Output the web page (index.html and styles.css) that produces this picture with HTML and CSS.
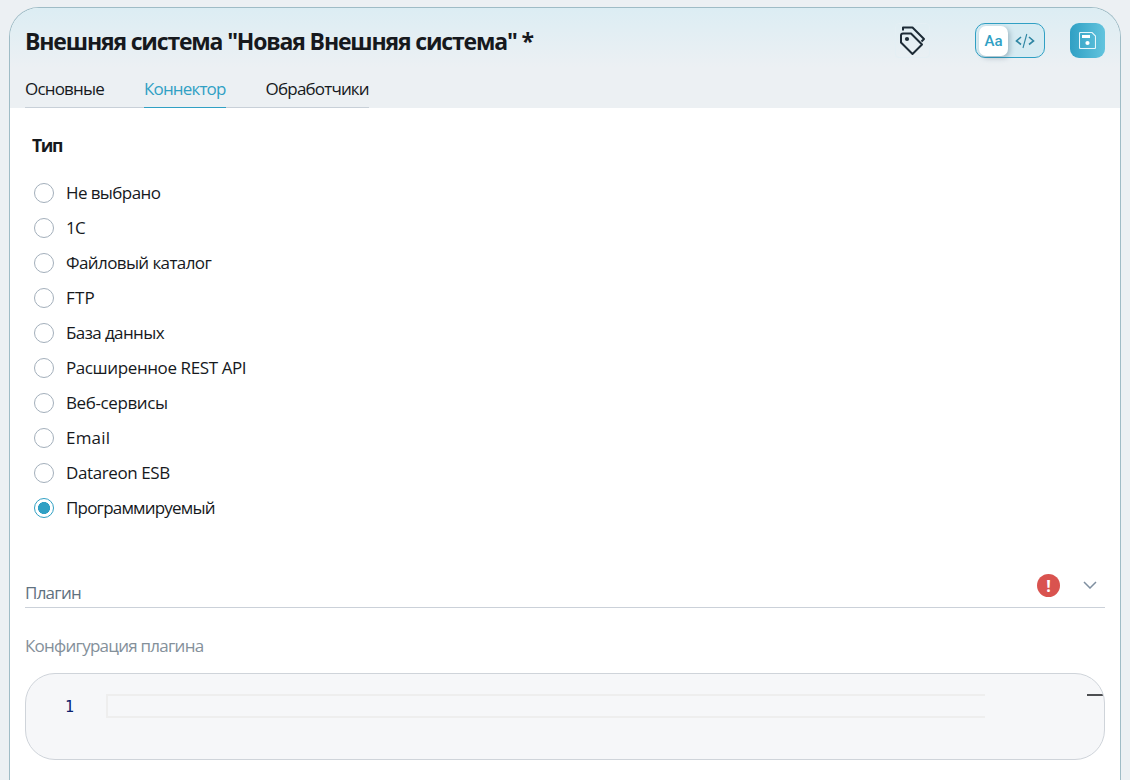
FILE: index.html
```html
<!DOCTYPE html>
<html lang="ru">
<head>
    <meta charset="UTF-8">
    <meta name="viewport" content="width=device-width, initial-scale=1.0">
    <title>Внешняя система</title>
    <link rel="stylesheet" href="styles.css">
</head>
<body>
<div class="panel">
    <header class="header">
        <div class="title-row">
            <h1>Внешняя система "Новая Внешняя система" *</h1>
            <div class="actions">
                <button type="button" class="tag-button" aria-label="Метки">
                    <svg width="28" height="30" viewBox="0 0 28 30" fill="none" stroke="#1d2b36" stroke-width="2" stroke-linejoin="round">
                        <path d="M4 4.5V1.5H13.5L25 13L22.5 15.5"/>
                        <path d="M4 7.5H12L23 18.5L13.5 28L2 16.5V9.5Q2 7.5 4 7.5Z"/>
                        <circle cx="8" cy="13" r="2.1" fill="#1d2b36" stroke="none"/>
                    </svg>
                </button>
                <div class="mode-switch">
                    <span class="mode active">Aa</span>
                    <span class="mode">
                        <svg width="20" height="16" viewBox="0 0 20 16" fill="none" stroke="#2f86a3" stroke-width="1.6">
                            <path d="M6 4L1.5 8L6 11.5M14 4L18.5 8L14 11.5"/>
                            <path d="M11.8 1L8 15" stroke-width="1.1"/>
                        </svg>
                    </span>
                </div>
                <button type="button" class="save-button" aria-label="Сохранить">
                    <svg width="17" height="17" viewBox="0 0 17 17" fill="none" stroke="#e6f6fb" stroke-width="1.1">
                        <path d="M1.5 .5H13L16.5 4V15.5Q16.5 16.5 15.5 16.5H1.5Q.5 16.5 .5 15.5V1.5Q.5 .5 1.5 .5Z"/>
                        <path d="M3 3H11V6H3Z" fill="#fff" stroke="none"/>
                        <circle cx="8.5" cy="11" r="2.1" fill="#fff" stroke="none"/>
                    </svg>
                </button>
            </div>
        </div>
        <nav class="tabs">
            <a class="tab">Основные</a>
            <a class="tab active">Коннектор</a>
            <a class="tab">Обработчики</a>
        </nav>
    </header>
    <main class="content">
        <h2>Тип</h2>
        <div class="radio-list">
            <label class="radio"><input type="radio" name="type"><span>Не выбрано</span></label>
            <label class="radio"><input type="radio" name="type"><span>1С</span></label>
            <label class="radio"><input type="radio" name="type"><span>Файловый каталог</span></label>
            <label class="radio latin"><input type="radio" name="type"><span>FTP</span></label>
            <label class="radio"><input type="radio" name="type"><span>База данных</span></label>
            <label class="radio mixed"><input type="radio" name="type"><span>Расширенное REST API</span></label>
            <label class="radio mixed"><input type="radio" name="type"><span>Веб-сервисы</span></label>
            <label class="radio latin"><input type="radio" name="type"><span>Email</span></label>
            <label class="radio mixed"><input type="radio" name="type"><span>Datareon ESB</span></label>
            <label class="radio tight"><input type="radio" name="type" checked><span>Программируемый</span></label>
        </div>
        <div class="select">
            <span class="select-label">Плагин</span>
            <span class="error">!</span>
            <svg class="chevron" width="14" height="8" viewBox="0 0 14 8" fill="none" stroke="#7f8fa0" stroke-width="1.5">
                <path d="M1 1L7 7L13 1"/>
            </svg>
        </div>
        <div class="config-label">Конфигурация плагина</div>
        <div class="editor">
            <span class="line-number">1</span>
            <div class="line"></div>
            <div class="cursor-mark"></div>
        </div>
    </main>
</div>
</body>
</html>
```
FILE: styles.css
```css
* {
    box-sizing: border-box;
}
body {
    margin: 0;
    padding: 7px 9px 0;
    height: 780px;
    overflow: hidden;
    background: #ecf0f3;
    font-family: 'Open Sans', 'Noto Sans', sans-serif;
    font-size: 17px;
    letter-spacing: -0.75px;
    line-height: 24px;
    color: #16191d;
}
.panel {
    height: 773px;
    border: 1px solid #9fbcc6;
    border-bottom: none;
    border-radius: 30px 30px 0 0;
    background: #fff;
    overflow: hidden;
}
.header {
    height: 100px;
    padding: 15px 15px 0;
    background: linear-gradient(#dcedf3, #ecf0f3 60%);
}
.title-row {
    display: flex;
    justify-content: space-between;
    height: 35px;
}
h1 {
    margin: 0;
    font-size: 23px;
    letter-spacing: -1.17px;
    line-height: 36px;
    font-weight: 700;
    white-space: nowrap;
}
.actions {
    display: flex;
}
button {
    padding: 0;
    border: none;
    display: flex;
    align-items: center;
    justify-content: center;
}
.tag-button {
    width: 35px;
    height: 35px;
    margin-right: 45px;
    background: none;
    border: 1px solid #e4eff4;
    border-radius: 4px;
}
.mode-switch {
    display: flex;
    width: 70px;
    height: 35px;
    padding: 2px 3px;
    margin-right: 25px;
    border: 1px solid #30a0c4;
    border-radius: 10px;
    background: #d6ebf2;
}
.mode {
    display: flex;
    align-items: center;
    justify-content: center;
    width: 34px;
    height: 29px;
}
.mode.active {
    width: 30px;
    height: 30px;
    border-radius: 7px;
    background: #fff;
    box-shadow: 2px 2px 5px rgba(60, 90, 110, 0.35);
    font-family: Roboto, sans-serif;
    font-size: 15px;
    letter-spacing: 0;
    font-weight: 500;
    color: #30a0c4;
}
.save-button {
    width: 35px;
    height: 35px;
    border-radius: 9px;
    background: linear-gradient(90deg, #30a0c4, #62c4de);
}
.tabs {
    display: flex;
    gap: 40px;
    width: fit-content;
    height: 35px;
    margin-top: 15px;
    box-shadow: inset 0 -1px #c8d0d8;
}
.tab {
    letter-spacing: -0.82px;
    line-height: 32px;
    white-space: nowrap;
}
.tab.active {
    color: #30a0c4;
    border-bottom: 1px solid #30a0c4;
}
.content {
    padding: 25px 15px 0;
}
h2 {
    margin: 0 0 17px 7px;
    font-size: 17.5px;
    letter-spacing: -1.4px;
    line-height: 25px;
    font-weight: 700;
}
.radio-list {
    padding-left: 9px;
}
.radio {
    display: flex;
    align-items: center;
    gap: 12px;
    height: 35px;
    letter-spacing: -0.6px;
}
.radio.mixed {
    letter-spacing: -0.4px;
}
.radio.latin {
    letter-spacing: 0.2px;
}
.radio.tight {
    letter-spacing: -0.8px;
}
.radio input {
    appearance: none;
    width: 20px;
    height: 20px;
    margin: 0;
    border: 1px solid #a3afbb;
    border-radius: 50%;
}
.radio input:checked {
    border-color: #30a0c4;
    background: radial-gradient(circle, #30a0c4 5.7px, transparent 6.3px);
}
.select {
    display: flex;
    align-items: center;
    height: 45px;
    margin-top: 38px;
    padding-right: 8px;
    border-bottom: 1px solid #cbd1d9;
}
.select-label {
    flex: 1;
    padding-top: 15px;
    color: #5f7180;
}
.error {
    width: 23px;
    height: 23px;
    margin-right: 23px;
    border-radius: 50%;
    background: #d9534f;
    color: #fff;
    font-size: 16px;
    letter-spacing: 0;
    font-weight: 700;
    line-height: 24px;
    text-align: center;
}
.config-label {
    margin-top: 26px;
    color: #84909a;
}
.editor {
    display: flex;
    height: 87px;
    margin-top: 15px;
    padding-top: 20px;
    border: 1px solid #cfd4da;
    border-radius: 30px;
    background: #f6f7f9;
    overflow: hidden;
}
.line-number {
    width: 48px;
    margin-right: 32px;
    font-family: 'DejaVu Sans Mono', monospace;
    font-size: 15px;
    letter-spacing: 0;
    line-height: 26px;
    text-align: right;
    color: #0b216f;
}
.line {
    width: 879px;
    height: 24px;
    border: 2px solid #eee;
    border-right: none;
}
.cursor-mark {
    width: 17px;
    height: 2px;
    margin-left: auto;
    background: #4d4f52;
}
```
